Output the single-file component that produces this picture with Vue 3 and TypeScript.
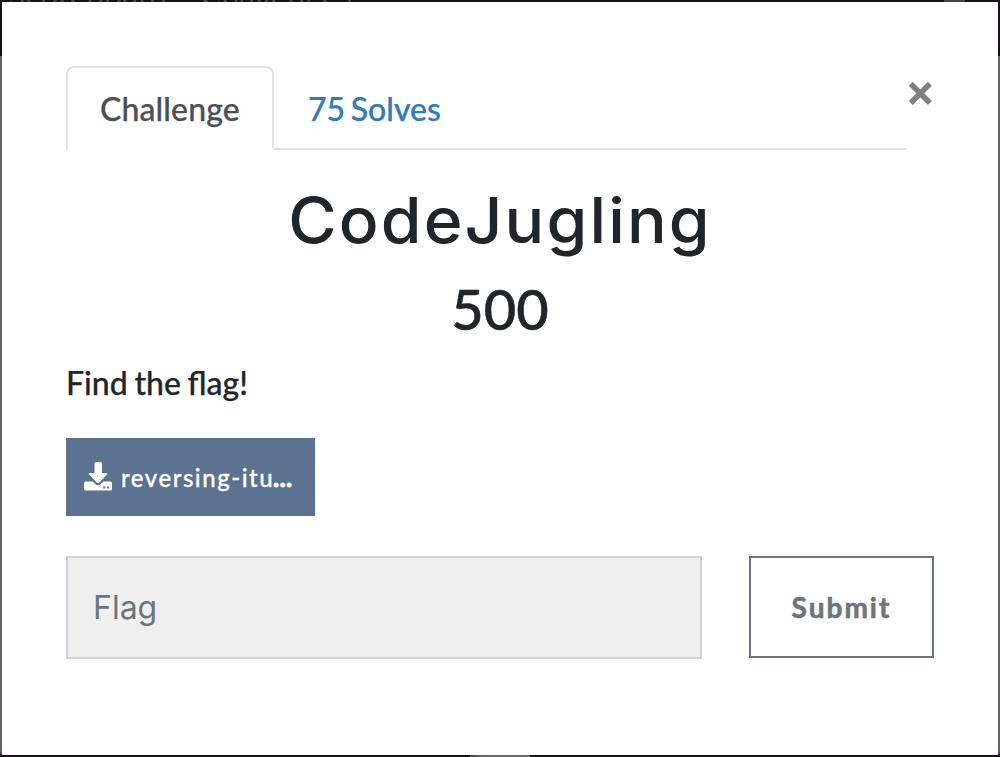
<script setup lang="ts">
import { ref } from 'vue'

const flag = ref('')
const challenge = { name: 'CodeJugling', value: 500, solves: 75, text: 'Find the flag!', file: 'reversing-itu' }
</script>

<template>
  <div class="backdrop">
    <div class="topbar">
      <span class="nav-a">Scoreboard</span>
      <span class="nav-b">Challenges</span>
      <i class="nav-mark"></i>
    </div>
    <div class="bottom-mark"></div>
    <main class="modal">
      <header class="head">
        <nav class="tabs">
          <a class="tab active">Challenge</a>
          <a class="tab solves">{{ challenge.solves }} Solves</a>
        </nav>
        <button class="close" aria-label="Close">
          <svg width="26" height="26" viewBox="0 0 26 26"><path d="M3.7 3.7L22.900 22.900M22.900 3.7L3.7 22.900" stroke="#808080" stroke-width="5.6" fill="none" /></svg>
        </button>
      </header>
      <h2 class="name">{{ challenge.name }}</h2>
      <h3 class="value">{{ challenge.value }}</h3>
      <p class="desc">{{ challenge.text }}</p>
      <a class="file">
        <svg width="28" height="29" viewBox="0 0 28 29" fill="#fff">
          <path d="M12 0h4.500q1.500 0 1.500 1.500V11h4q2.200 0 1 1.600L15.300 20.500q-1.300 1.200-2.600 0L5 12.600Q3.800 11 6 11h4.500V1.500Q10.500 0 12 0Z" />
          <path fill-rule="evenodd" d="M1.500 19.500H8.700L11.500 22.300q2.500 2 5 0L19.300 19.500H26.500Q28 19.500 28 21V27Q28 28.500 26.500 28.500H1.500Q0 28.500 0 27V21Q0 19.500 1.500 19.500ZM19.300 24.600v2h2v-2ZM23 24.600v2h2v-2Z" />
        </svg>
        <span class="file-name">{{ challenge.file }}<b>...</b></span>
      </a>
      <form class="answer" @submit.prevent>
        <input v-model="flag" class="flag" placeholder="Flag" />
        <button class="submit">Submit</button>
      </form>
    </main>
  </div>
</template>

<style>
body { margin: 0; }
</style>

<style scoped>
* { box-sizing: border-box; }
.backdrop {
  position: relative;
  width: 1000px;
  height: 757px;
  padding: 2px;
  overflow: hidden;
  background: linear-gradient(#151118 56px, #626262 56px, #626262 752px, #151118 755px);
  font-family: Lato, "Liberation Sans", sans-serif;
}
.topbar {
  position: absolute;
  left: 0;
  top: 0;
  width: 1000px;
  height: 2px;
  overflow: hidden;
  display: flex;
  align-items: flex-end;
  padding-left: 8px;
  color: #4a484c;
  font-size: 32px;
  line-height: 16px;
}
.nav-a { width: 192px; }
.nav-b { width: 744px; }
.nav-mark { width: 21px; height: 2px; background: #444; }
.bottom-mark {
  position: absolute;
  left: 470px;
  bottom: 0;
  width: 60px;
  height: 2px;
  background: linear-gradient(90deg, #444, #686868 12px);
}
.modal {
  position: relative;
  width: 996px;
  height: 753px;
  padding: 64px;
  background: #fff;
  color: #212529;
}
.head { display: flex; height: 84px; }
.tabs { display: flex; width: 840px; border-bottom: 2px solid #dee2e6; }
.tab {
  height: 84px;
  padding: 17px 32px 0;
  border: 2px solid transparent;
  border-radius: 8px 8px 0 0;
  font-size: 32px;
  line-height: 48px;
  color: #337ab7;
  font-weight: 500;
  -webkit-text-stroke: 0.25px currentColor;
  white-space: nowrap;
}
.tab.active { width: 208px; background: #fff; border-color: #dee2e6 #dee2e6 #fff; color: #495057; letter-spacing: 0.12px; }
.solves { word-spacing: -2.5px; }
.close { padding: 0; border: 0; background: none; width: 28px; height: 26px; margin-top: 14px; line-height: 0; }
.name {
  margin: 32px 0 0;
  height: 77px;
  text-align: center;
  font: 500 63px/77px Inter, "Liberation Sans", sans-serif;
  letter-spacing: 2px;
  transform: scaleX(1.048);
}
.value {
  margin: 16px 0 0;
  height: 67px;
  text-align: center;
  font-size: 56px;
  line-height: 67px;
  font-weight: 500;
  -webkit-text-stroke: 0.5px currentColor;
}
.desc {
  margin: 17px 0 0;
  font-size: 32px;
  line-height: 48px;
  font-weight: 500;
  word-spacing: -1.4px;
  -webkit-text-stroke: 0.25px currentColor;
}
.file {
  display: flex;
  margin-top: 31px;
  width: 249px;
  height: 78px;
  padding: 0 0 0 18px;
  align-items: center;
  gap: 9px;
  background: #5b7290;
  color: #fff;
  font-size: 24px;
  line-height: 36px;
  font-weight: 500;
  letter-spacing: 1.52px;
  -webkit-text-stroke: 0.3px currentColor;
  white-space: nowrap;
}
.file svg { margin-top: -1px; }
.file-name { padding-top: 2px; }
.file-name b { font-weight: 900; letter-spacing: 0.8px; margin-left: -1px; -webkit-text-stroke-width: 1px; }
.answer { display: flex; align-items: flex-start; gap: 47px; margin-top: 40px; }
.flag {
  width: 636px;
  height: 103px;
  padding: 0 25px;
  border: 2px solid #ced4da;
  border-radius: 0;
  outline: none;
  background: #efefef;
  font: 400 32px Inter, "Liberation Sans", sans-serif;
}
.flag::placeholder { color: #6c757d; opacity: 1; }
.submit {
  width: 185px;
  height: 102px;
  padding: 0;
  border: 2px solid #6c757d;
  background: #fff;
  color: #6c757d;
  font: 700 28px/42px Lato, "Liberation Sans", sans-serif;
  letter-spacing: 2px;
  -webkit-text-stroke: 0.6px currentColor;
}
</style>
